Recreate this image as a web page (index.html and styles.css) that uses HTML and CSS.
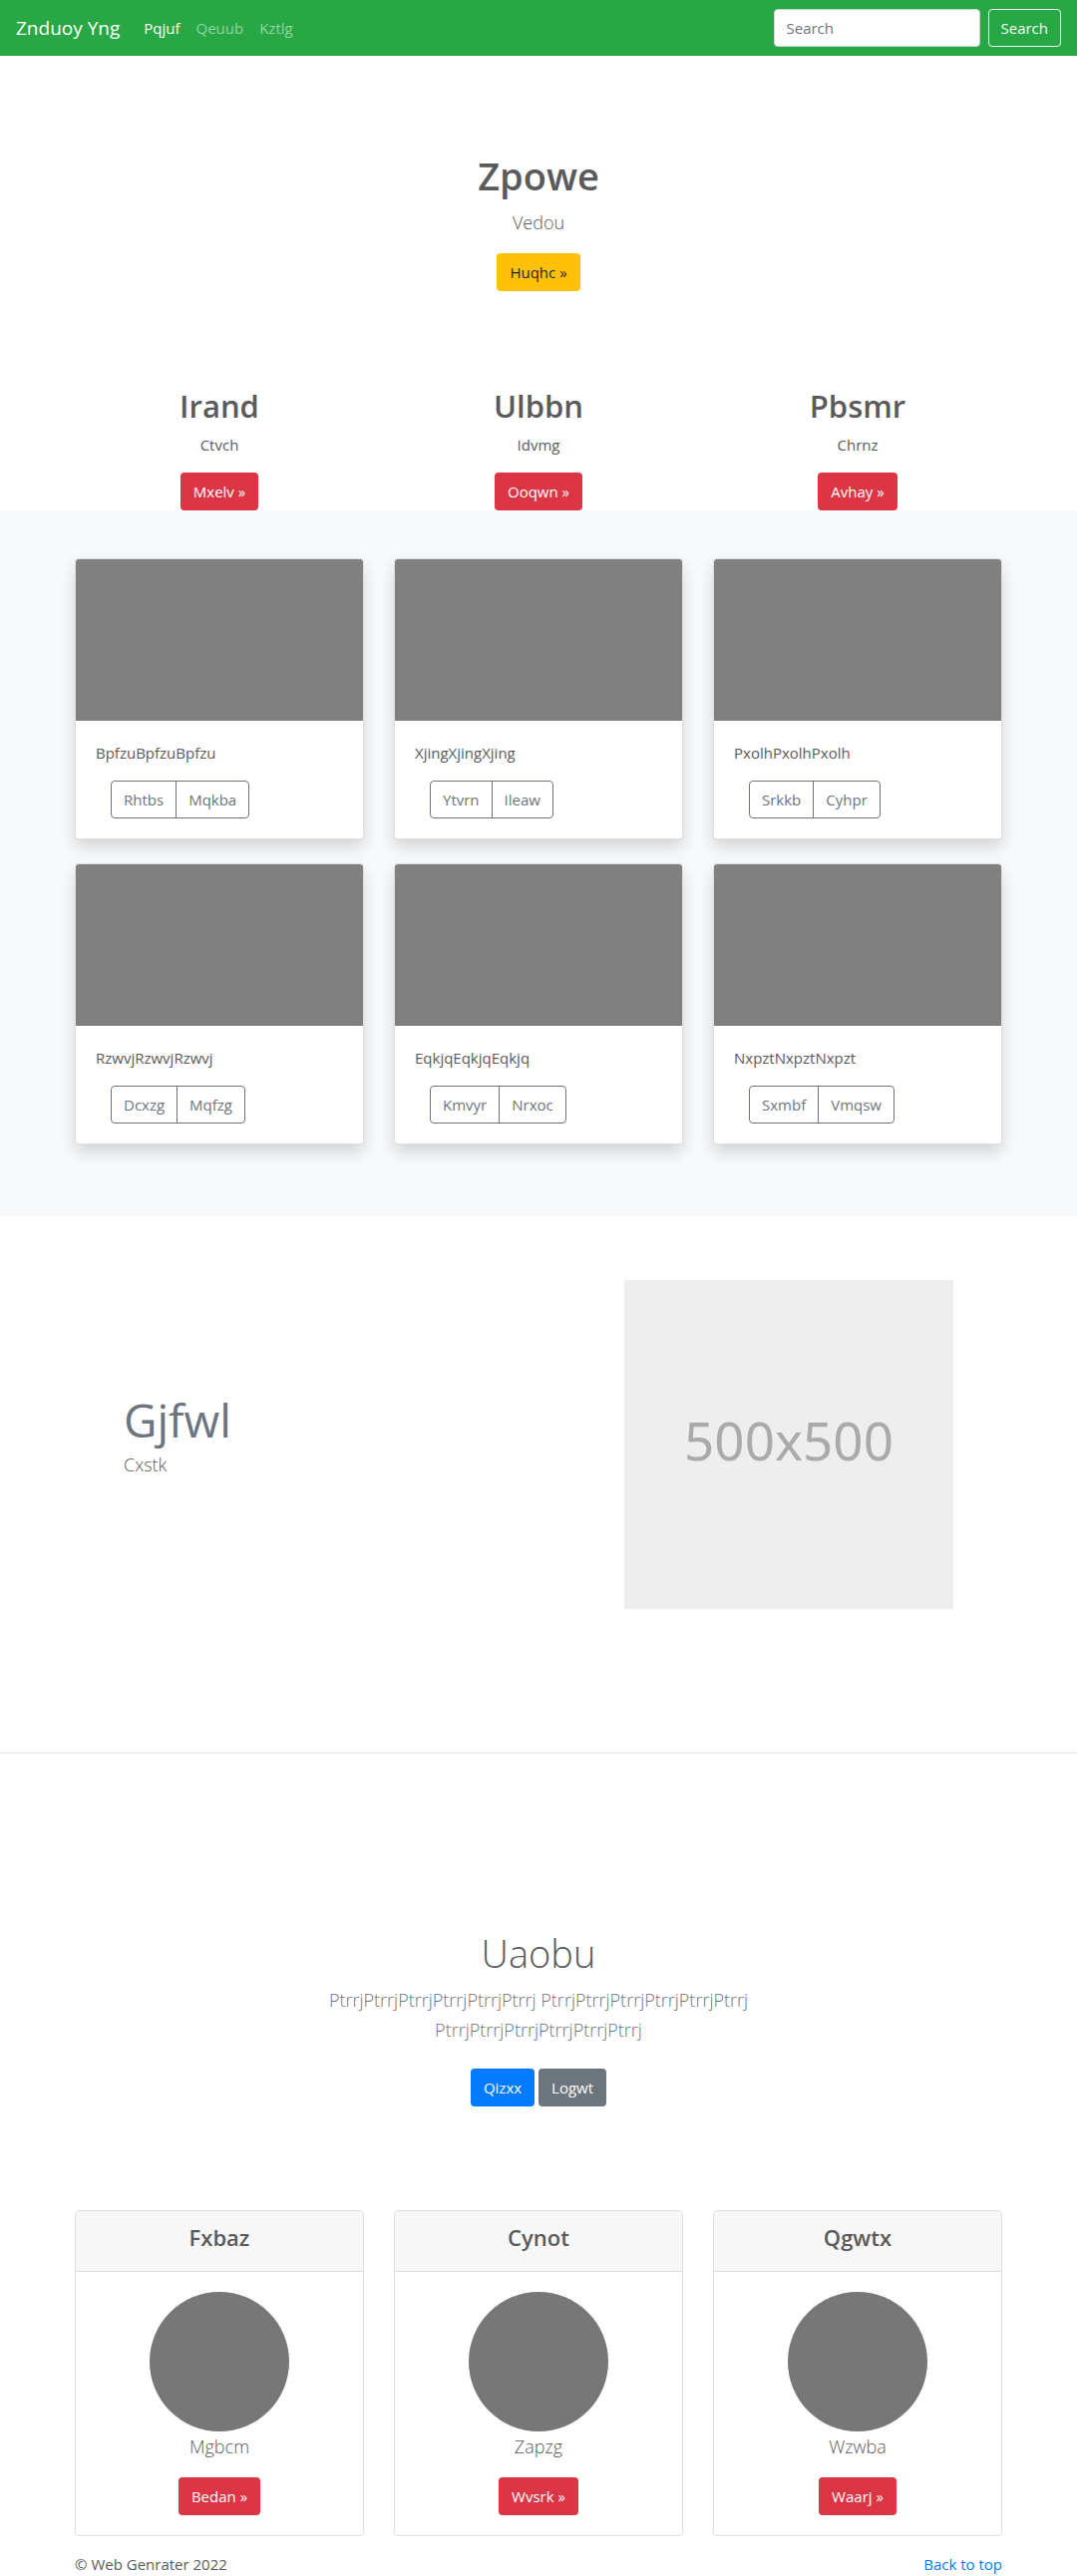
FILE: index.html
```html
<!DOCTYPE html>
<html lang="en">
<head>
<meta charset="utf-8">
<meta name="viewport" content="width=device-width, initial-scale=1">
<title>Znduoy Yng</title>
<link rel="stylesheet" href="styles.css">
</head>
<body id="top">
<nav class="navbar">
  <a class="brand" href="#">Znduoy Yng</a>
  <ul class="nav-links">
    <li><a class="active" href="#">Pqjuf</a></li>
    <li><a href="#">Qeuub</a></li>
    <li><a href="#">Kztlg</a></li>
  </ul>
  <form class="search">
    <input type="search" placeholder="Search" aria-label="Search">
    <button class="btn btn-outline-light" type="button">Search</button>
  </form>
</nav>
<main>
  <section class="hero">
    <h1>Zpowe</h1>
    <p class="lead">Vedou</p>
    <a class="btn btn-warning" href="#">Huqhc »</a>
  </section>

  <section class="container columns marketing">
    <div><h2>Irand</h2><p>Ctvch</p><a class="btn btn-danger" href="#">Mxelv »</a></div>
    <div><h2>Ulbbn</h2><p>Idvmg</p><a class="btn btn-danger" href="#">Ooqwn »</a></div>
    <div><h2>Pbsmr</h2><p>Chrnz</p><a class="btn btn-danger" href="#">Avhay »</a></div>
  </section>

  <section class="album">
    <div class="container columns album-grid">
      <article class="card shadow">
        <div class="card-image"></div>
        <div class="card-body"><p>BpfzuBpfzuBpfzu</p>
          <div class="btn-group"><button class="btn" type="button">Rhtbs</button><button class="btn" type="button">Mqkba</button></div></div>
      </article>
      <article class="card shadow">
        <div class="card-image"></div>
        <div class="card-body"><p>XjingXjingXjing</p>
          <div class="btn-group"><button class="btn" type="button">Ytvrn</button><button class="btn" type="button">Ileaw</button></div></div>
      </article>
      <article class="card shadow">
        <div class="card-image"></div>
        <div class="card-body"><p>PxolhPxolhPxolh</p>
          <div class="btn-group"><button class="btn" type="button">Srkkb</button><button class="btn" type="button">Cyhpr</button></div></div>
      </article>
      <article class="card shadow">
        <div class="card-image"></div>
        <div class="card-body"><p>RzwvjRzwvjRzwvj</p>
          <div class="btn-group"><button class="btn" type="button">Dcxzg</button><button class="btn" type="button">Mqfzg</button></div></div>
      </article>
      <article class="card shadow">
        <div class="card-image"></div>
        <div class="card-body"><p>EqkjqEqkjqEqkjq</p>
          <div class="btn-group"><button class="btn" type="button">Kmvyr</button><button class="btn" type="button">Nrxoc</button></div></div>
      </article>
      <article class="card shadow">
        <div class="card-image"></div>
        <div class="card-body"><p>NxpztNxpztNxpzt</p>
          <div class="btn-group"><button class="btn" type="button">Sxmbf</button><button class="btn" type="button">Vmqsw</button></div></div>
      </article>
    </div>
  </section>

  <section class="featurette">
    <div class="featurette-text">
      <h2>Gjfwl</h2>
      <p class="lead">Cxstk</p>
    </div>
    <div class="placeholder">500x500</div>
  </section>
  <hr>

  <section class="callout">
    <h2>Uaobu</h2>
    <p class="lead muted">PtrrjPtrrjPtrrjPtrrjPtrrjPtrrj PtrrjPtrrjPtrrjPtrrjPtrrjPtrrj PtrrjPtrrjPtrrjPtrrjPtrrjPtrrj</p>
    <div class="actions">
      <a class="btn btn-primary" href="#">Qizxx</a>
      <a class="btn btn-secondary" href="#">Logwt</a>
    </div>
  </section>

  <section class="container columns profiles">
    <article class="card">
      <h4 class="card-header">Fxbaz</h4>
      <div class="card-body"><div class="avatar"></div><p class="lead">Mgbcm</p><a class="btn btn-danger" href="#">Bedan »</a></div>
    </article>
    <article class="card">
      <h4 class="card-header">Cynot</h4>
      <div class="card-body"><div class="avatar"></div><p class="lead">Zapzg</p><a class="btn btn-danger" href="#">Wvsrk »</a></div>
    </article>
    <article class="card">
      <h4 class="card-header">Qgwtx</h4>
      <div class="card-body"><div class="avatar"></div><p class="lead">Wzwba</p><a class="btn btn-danger" href="#">Waarj »</a></div>
    </article>
  </section>
</main>
<footer class="container footer">
  <span>© Web Genrater 2022</span>
  <a href="#top">Back to top</a>
</footer>
</body>
</html>
```
FILE: styles.css
```css
*, *::before, *::after { box-sizing: border-box; }

body {
  margin: 0;
  background: #fff;
  color: #5a5a5a;
  font-family: "Segoe UI", "Open Sans", "Noto Sans", sans-serif;
  font-size: 15px;
  line-height: 24px;
}

h1, h2, h4, p { margin: 0; }
h1, h2, h4 { font-weight: 600; }
h1 { font-size: 38px; line-height: 48px; }
h2 { font-size: 31px; line-height: 38px; }
a { color: #007bff; text-decoration: none; }

.lead { font-size: 18px; line-height: 30px; font-weight: 300; }
.muted { color: #6c757d; }

.container {
  width: 100%;
  max-width: 960px;
  margin: 0 auto;
  padding: 0 15px;
}

.columns {
  display: grid;
  grid-template-columns: repeat(3, 1fr);
  column-gap: 30px;
}

/* Buttons */
.btn {
  display: inline-block;
  padding: 6px 12px;
  border: 1px solid transparent;
  border-radius: 4px;
  background: transparent;
  color: #fff;
  font: inherit;
  text-align: center;
  vertical-align: middle;
  cursor: pointer;
}
.btn-outline-light { border-color: #f8f9fa; color: #f8f9fa; }
.btn-warning { background: #ffc107; color: #212529; }
.btn-danger { background: #dc3545; }
.btn-primary { background: #007bff; }
.btn-secondary { background: #6c757d; }

.btn-group { display: flex; margin-left: 15px; }
.btn-group .btn { border-color: #6c757d; color: #6c757d; }
.btn-group .btn:first-child { border-radius: 4px 0 0 4px; }
.btn-group .btn:last-child { margin-left: -1px; border-radius: 0 4px 4px 0; }

/* Navigation */
.navbar {
  display: flex;
  align-items: center;
  min-height: 56px;
  padding: 8px 16px;
  background: #28a745;
}
.brand { margin-right: 16px; color: #fff; font-size: 19px; line-height: 30px; }
.nav-links { display: flex; margin: 0; padding: 0; list-style: none; }
.nav-links a { display: block; padding: 8px; color: rgba(255, 255, 255, .5); }
.nav-links .active { color: #fff; }
.search { display: flex; gap: 8px; margin-left: auto; }
.search input {
  width: 207px;
  height: 38px;
  padding: 6px 12px;
  border: 1px solid #ced4da;
  border-radius: 4px;
  background: #fff;
  color: #495057;
  font: inherit;
}
.search input::placeholder { color: #6c757d; opacity: 1; }

/* Introduction */
.hero { padding: 96px 15px; text-align: center; }
.hero h1 { margin-bottom: 8px; }
.hero .lead { margin-bottom: 16px; }

.marketing { text-align: center; }
.marketing h2 { margin-bottom: 8px; }
.marketing p { margin-bottom: 16px; }

/* Cards */
.card { overflow: hidden; border: 1px solid #dfdfdf; border-radius: 4px; background: #fff; }
.card-body { padding: 20px; }
.card-body p { margin-bottom: 16px; }
.card-image { height: 162px; background: #808080; }
.shadow { box-shadow: 0 8px 16px rgba(0, 0, 0, .15); }

.album { padding: 48px 0 72px; background: #f8f9fa; }
.album-grid { row-gap: 24px; }

/* Featurette */
.featurette {
  display: flex;
  align-items: center;
  justify-content: space-between;
  max-width: 862px;
  margin: 0 auto;
  padding: 64px 15px 144px;
}
.featurette-text { padding-bottom: 20px; }
.featurette-text h2 { color: #6c757d; font-size: 46px; font-weight: 400; line-height: 60px; }
.placeholder {
  display: grid;
  place-items: center;
  width: 330px;
  aspect-ratio: 1;
  padding-bottom: 8px;
  background: #eee;
  color: #aaa;
  font-family: "Noto Sans", sans-serif;
  font-size: 53px;
}
hr { width: 100%; margin: 0; border: 0; border-top: 1px solid #e5e5e5; }

/* Callout */
.callout { padding: 176px 15px 104px; text-align: center; }
.callout h2 { margin-bottom: 8px; font-size: 38px; font-weight: 300; line-height: 48px; }
.callout .lead { max-width: 510px; margin: 0 auto 24px; }
.actions { display: flex; justify-content: center; gap: 4px; }

/* Profiles */
.profiles { text-align: center; }
.card-header {
  padding: 12px 20px 20px;
  border-bottom: 1px solid #dfdfdf;
  background: #f7f7f7;
  font-size: 22px;
  line-height: 28px;
}
.avatar { width: 140px; height: 140px; margin: 0 auto; border-radius: 50%; background: #777; }

.footer { display: flex; justify-content: space-between; padding-top: 16px; }
```
